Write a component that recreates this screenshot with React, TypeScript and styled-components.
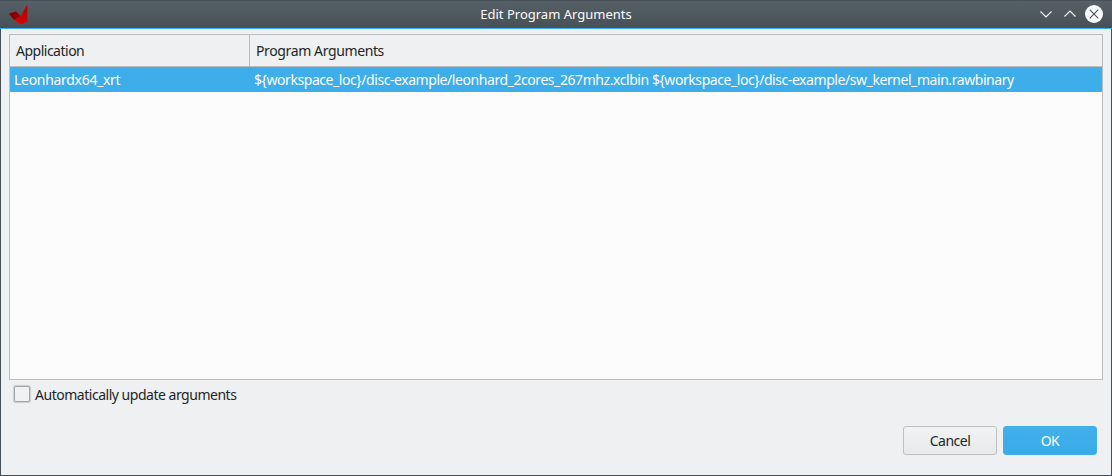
import React from "react";
import styled, { createGlobalStyle } from "styled-components";

const GlobalStyle = createGlobalStyle`
  body {
    margin: 0;
    font-family: "Noto Sans", sans-serif;
    font-size: 14px;
    color: #232627;
  }
  * { box-sizing: border-box; }
`;

const Window = styled.div`
  width: 1112px;
  height: 476px;
  display: flex;
  flex-direction: column;
  border: 1px solid #475057;
  border-top: none;
  background: #eff0f1;
`;

const TitleBar = styled.header`
  height: 29px;
  margin: 0 -1px;
  padding: 0 9px 2px 8px;
  display: grid;
  grid-template-columns: 90px 1fr 89px;
  align-items: center;
  background: linear-gradient(#566067, #475057);
  border-top: 1px solid #475057;
  border-bottom: 1px solid #3daee9;
`;

const Title = styled.h1`
  margin: 0;
  padding-top: 2px;
  font-size: 13px;
  line-height: 23px;
  font-weight: 400;
  text-align: center;
  color: #fcfcfc;
`;

const WindowControls = styled.div`
  display: flex;
  justify-content: flex-end;
  gap: 6px;
`;

const Content = styled.main`
  flex: 1;
  display: flex;
  flex-direction: column;
  padding: 5px 8px 0;
`;

const Table = styled.div`
  height: 346px;
  border: 1px solid #bcbebf;
  background: #fcfcfc;
`;

const HeaderRow = styled.div`
  height: 32px;
  display: grid;
  grid-template-columns: 240px 1fr;
  background: #eff0f1;
  border-bottom: 1px solid #bcbebf;
`;

const HeaderCell = styled.div<{ $divided?: boolean; $spacing: string }>`
  padding-left: 6px;
  line-height: 31px;
  letter-spacing: ${(p) => p.$spacing};
  border-right: ${(p) => (p.$divided ? "1px solid #bcbebf" : "none")};
`;

const Row = styled.div`
  height: 25px;
  display: grid;
  grid-template-columns: 240px 1fr;
  background: #3daee9;
  color: #fcfcfc;
`;

const Cell = styled.div<{ $spacing: string }>`
  padding-left: 4px;
  line-height: 25px;
  white-space: nowrap;
  letter-spacing: ${(p) => p.$spacing};
`;

const CheckLabel = styled.label`
  display: flex;
  align-items: center;
  align-self: flex-start;
  gap: 5px;
  margin: 4px 0 0 5px;
  line-height: 22px;
  letter-spacing: -0.48px;
`;

const CheckBox = styled.input`
  appearance: none;
  width: 16px;
  height: 16px;
  margin: 0 0 2px;
  border: 1px solid #a3a5a7;
  border-radius: 2px;
  background: #f0f1f2;
  box-shadow: 0 0 1px 0.5px rgba(0, 0, 0, 0.15);
`;

const Actions = styled.footer`
  display: flex;
  justify-content: flex-end;
  gap: 6px;
  margin-top: 20px;
  padding-right: 6px;
`;

const Button = styled.button<{ $primary?: boolean }>`
  width: 94px;
  height: 29px;
  padding: 0;
  font: inherit;
  line-height: 27px;
  letter-spacing: -0.5px;
  border-radius: 3px;
  border: 1px solid ${(p) => (p.$primary ? "#3daee9" : "#bdbfc0")};
  color: ${(p) => (p.$primary ? "#fcfcfc" : "#232627")};
  background: ${(p) =>
    p.$primary ? "linear-gradient(#42b0ea, #38abe8)" : "linear-gradient(#f1f2f3, #e8e9ea)"};
`;

const AppLogo = () => (
  <svg width="22" height="22" viewBox="0 0 22 22">
    <defs>
      <linearGradient id="wing" x1="0" y1="0" x2="1" y2="0.6">
        <stop offset="0" stopColor="#7c0000" />
        <stop offset="1" stopColor="#990000" />
      </linearGradient>
      <linearGradient id="blade" x1="0" y1="1" x2="1" y2="0">
        <stop offset="0" stopColor="#e60000" />
        <stop offset="1" stopColor="#b00006" />
      </linearGradient>
    </defs>
    <path d="M.8 10.500 8 8.500 12.800 13.200 6 17Z" fill="url(#wing)" />
    <path d="M19.200 1.500 19.300 18.500 12.500 21.300 6 17 12.800 13.200Z" fill="url(#blade)" />
  </svg>
);

export default function App() {
  return (
    <>
      <GlobalStyle />
      <Window>
        <TitleBar>
          <AppLogo />
          <Title>Edit Program Arguments</Title>
          <WindowControls>
            <svg width="18" height="18" viewBox="0 0 18 18" fill="none" stroke="#fcfcfc" strokeWidth="1.1">
              <path d="M3.500 6.500 9 12l5.500-5.500" />
            </svg>
            <svg width="18" height="18" viewBox="0 0 18 18" fill="none" stroke="#fcfcfc" strokeWidth="1.1">
              <path d="M3.500 11.500 9 6l5.500 5.500" />
            </svg>
            <svg width="18" height="18" viewBox="0 0 18 18" fill="none">
              <circle cx="9" cy="9" r="9" fill="#fcfcfc" />
              <path d="m4.700 4.700 8.600 8.600m0-8.600-8.600 8.600" stroke="#475057" strokeWidth="1.1" />
            </svg>
          </WindowControls>
        </TitleBar>
        <Content>
          <Table>
            <HeaderRow>
              <HeaderCell $divided $spacing="-0.5px">Application</HeaderCell>
              <HeaderCell $spacing="-0.38px">Program Arguments</HeaderCell>
            </HeaderRow>
            <Row>
              <Cell $spacing="-0.3px">Leonhardx64_xrt</Cell>
              <Cell $spacing="-0.433px">
                {"${workspace_loc}/disc-example/leonhard_2cores_267mhz.xclbin ${workspace_loc}/disc-example/sw_kernel_main.rawbinary"}
              </Cell>
            </Row>
          </Table>
          <CheckLabel>
            <CheckBox type="checkbox" />
            Automatically update arguments
          </CheckLabel>
          <Actions>
            <Button>Cancel</Button>
            <Button $primary>OK</Button>
          </Actions>
        </Content>
      </Window>
    </>
  );
}
